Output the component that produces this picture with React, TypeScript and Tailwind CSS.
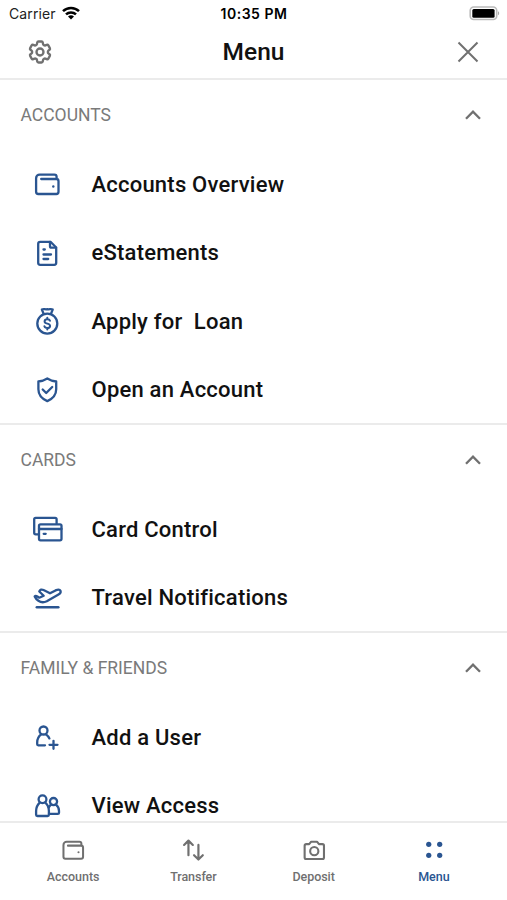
import type { ReactNode } from "react";
import { HiOutlineCog6Tooth } from "react-icons/hi2";

type MenuItem = {
    label: string;
    icon: ReactNode;
};

type MenuSection = {
    title: string;
    items: MenuItem[];
};

function Icon({
    size = 32,
    stroke = 2.3,
    children,
}: {
    size?: number;
    stroke?: number;
    children: ReactNode;
}) {
    return (
        <svg
            width={size}
            height={size}
            viewBox="0 0 32 32"
            fill="none"
            stroke="currentColor"
            strokeWidth={stroke}
            strokeLinecap="round"
            strokeLinejoin="round"
            className="shrink-0"
        >
            {children}
        </svg>
    );
}

const walletShape = (
    <>
        <path d="M25.600 11V8.800A2.200 2.200 0 0 0 23.400 6.600H8.700A3.600 3.600 0 0 0 5.100 10.200v13.600a2.200 2.200 0 0 0 2.200 2.200h18a2.200 2.200 0 0 0 2.200-2.200V13.200a2.200 2.200 0 0 0-2.200-2.200H10.200" />
        <circle cx="22.300" cy="18.500" r="1.200" fill="currentColor" stroke="none" />
    </>
);

const sections: MenuSection[] = [
    {
        title: "ACCOUNTS",
        items: [
            { label: "Accounts Overview", icon: <Icon>{walletShape}</Icon> },
            {
                label: "eStatements",
                icon: (
                    <Icon>
                        <path d="M19.500 4.800H9.200a2 2 0 0 0-2 2v19a2 2 0 0 0 2 2h14a2 2 0 0 0 2-2V10.500z" />
                        <path d="M19 5v4.200a1.500 1.500 0 0 0 1.500 1.500H25M12.500 12.500h1.300M12.500 17.500h7.500M12.500 22h4.700" />
                    </Icon>
                ),
            },
            {
                label: "Apply for\u00a0 Loan",
                icon: (
                    <Icon>
                        <circle cx="16.300" cy="18.600" r="10" />
                        <path d="M12.600 8.700 10.900 4.600c1.800-1.100 3 .1 5.400-.4 2.400.5 3.600-.7 5.400.4L20 8.700" />
                        <path
                            d="M19 15.800c-.3-1-1.400-1.500-2.700-1.500-1.600 0-2.700.8-2.700 2.100 0 2.900 5.500 1.500 5.500 4.500 0 1.300-1.200 2.100-2.800 2.100-1.500 0-2.600-.6-2.900-1.700M16.300 12.800v1.400M16.300 23v1.400"
                            strokeWidth="2"
                        />
                    </Icon>
                ),
            },
            {
                label: "Open an Account",
                icon: (
                    <Icon>
                        <path d="M16.300 4.500c2.900 1.800 5.800 2.700 8.900 3v7.800c0 5.300-3.500 9.500-8.900 11.800-5.400-2.300-8.900-6.500-8.900-11.800V7.500c3.100-.3 6-1.200 8.900-3z" />
                        <path d="m11.700 15.500 3.500 3.500 6-6" />
                    </Icon>
                ),
            },
        ],
    },
    {
        title: "CARDS",
        items: [
            {
                label: "Card Control",
                icon: (
                    <Icon>
                        <path d="M7.500 21.300H4.700a1.500 1.500 0 0 1-1.500-1.500V6.300a1.500 1.500 0 0 1 1.500-1.500h19.400a1.500 1.500 0 0 1 1.500 1.500v4.300" />
                        <rect x="8" y="11.300" width="22.500" height="16" rx="1.500" />
                        <path d="M8 16h22.500M12.700 20.800h2" />
                    </Icon>
                ),
            },
            {
                label: "Travel Notifications",
                icon: (
                    <Icon>
                        <path d="M5.800 25.200h21.500" strokeWidth="2.500" />
                        <path d="M3.700 14.500c.6-.9 1.500-.9 2.300-.3l2.300 1.500 4.400-1.900-4.400-4.300c.7-1.900 2.400-2.400 4.200-1.500l6.500 3.300 5.500-2.900c2.200-1 4.400-.9 5 .4.500 1.300-.3 2.700-2 3.700L15.800 19.300c-3 1.400-6 1.200-8.400-.5-1.800-1.200-2.900-2.500-3.700-4.300z" />
                    </Icon>
                ),
            },
        ],
    },
    {
        title: "FAMILY & FRIENDS",
        items: [
            {
                label: "Add a User",
                icon: (
                    <Icon>
                        <circle cx="12.500" cy="9.500" r="4" />
                        <path d="M14 24.300H7.200c-.6 0-1-.4-1-1v-2c0-3.300 1.400-5.900 3.900-7.900M15 13.400c1.600 1.200 2.700 2.500 3.400 4M22.500 19.800v8M18.500 23.800h8" />
                    </Icon>
                ),
            },
            {
                label: "View Access",
                icon: (
                    <Icon>
                        <circle cx="11.500" cy="9.300" r="3.900" />
                        <path d="M8.700 12.600c-2.300 2.200-3.600 4.900-3.600 8.400v3.700c0 .8.500 1.300 1.300 1.300h10.200c.8 0 1.300-.5 1.300-1.300V21c0-3.500-1.200-6.200-3.600-8.400" />
                        <circle cx="22.500" cy="11.600" r="3.600" />
                        <path d="M20 14.700c-1 .9-1.700 1.700-2.200 2.800M25 14.700c2 1.700 3 3.800 3 6.300v1.700c0 .8-.4 1.200-1.200 1.200H18" />
                    </Icon>
                ),
            },
        ],
    },
];

const tabs = [
    {
        label: "Accounts",
        icon: (
            <Icon size={28} stroke={2.3}>
                {walletShape}
            </Icon>
        ),
    },
    {
        label: "Transfer",
        icon: (
            <Icon size={28} stroke={2.5}>
                <path d="M10.800 22V5.500M5.800 10.200l5-4.900 5 4.900M22.200 10.200v16.500M17.200 22l5 4.900 5-4.900" />
            </Icon>
        ),
    },
    {
        label: "Deposit",
        icon: (
            <Icon size={28} stroke={2.4}>
                <path d="M7 9.300h3.500l2.300-2.800h6.600l2.300 2.800h4A1.700 1.700 0 0 1 27.400 11v13.500a1.700 1.700 0 0 1-1.700 1.700H7a1.700 1.700 0 0 1-1.700-1.700V11A1.700 1.700 0 0 1 7 9.300z" />
                <circle cx="16.300" cy="17.300" r="4.700" />
            </Icon>
        ),
    },
    {
        label: "Menu",
        active: true,
        icon: (
            <Icon size={28}>
                <g fill="currentColor" stroke="none">
                    <circle cx="10" cy="9.500" r="3" />
                    <circle cx="22.500" cy="9.500" r="3" />
                    <circle cx="10" cy="22" r="3" />
                    <circle cx="22.500" cy="22" r="3" />
                </g>
            </Icon>
        ),
    },
];

function StatusBar() {
    return (
        <div className="grid grid-cols-3 items-center h-[27px] pl-[9px] pr-[8px] font-['Inter'] text-black">
            <div className="flex items-center gap-[6px]">
                <span className="text-[14px] tracking-[0.1px] text-[#222]">Carrier</span>
                <svg width="18" height="14" viewBox="0 0 18 14" fill="none" stroke="#000" strokeWidth="2.500" className="-mt-px">
                    <path d="M1 5.200a11.500 11.500 0 0 1 16 0M4 8.400a7.200 7.200 0 0 1 10 0" />
                    <path d="M9 13.600 6 10.600a4.300 4.300 0 0 1 6 0z" fill="#000" stroke="none" />
                </svg>
            </div>
            <span className="text-center text-[14px] font-semibold tracking-[0.5px] whitespace-nowrap">10:35 PM</span>
            <svg width="31" height="15" viewBox="0 0 31 15" className="justify-self-end -mr-px">
                <rect x="1.200" y="1" width="26.500" height="12.500" rx="3.500" fill="#fff" stroke="#bbb" strokeWidth="1.600" />
                <rect x="3.300" y="3" width="22.300" height="8.700" rx="1.500" />
                <path d="M29 5.300c1.600.8 1.600 3.200 0 4z" fill="#aaa" />
            </svg>
        </div>
    );
}

function Section({ title, items }: MenuSection) {
    return (
        <section className="border-b-2 border-[#ebebeb]">
            <div className="flex items-center justify-between h-[70px] pl-[20.5px] pr-[26px] pb-px">
                <h2 className="pt-[1.5px] text-[17.5px] text-[#7a7a7a]">{title}</h2>
                <svg width="16" height="10" viewBox="0 0 16 10" fill="none" stroke="#707070" strokeWidth="2.300">
                    <path d="m1 8.700 7-7 7 7" />
                </svg>
            </div>
            <ul className="-mb-px">
                {items.map((item) => (
                    <li key={item.label} className="flex items-center h-[68.5px] pl-[31px] gap-[28.5px]">
                        <span className="text-[#2a5591]">{item.icon}</span>
                        <span className="text-[22px] font-medium tracking-[0.22px] text-[#111]">{item.label}</span>
                    </li>
                ))}
            </ul>
        </section>
    );
}

export default function App() {
    return (
        <div className="flex flex-col h-screen overflow-hidden bg-white font-['Roboto',sans-serif]">
            <StatusBar />
            <header className="grid grid-cols-3 items-center h-[53px] shrink-0 px-[28px] pb-px border-b-2 border-[#ebebeb] text-[#707070]">
                <HiOutlineCog6Tooth size={28} strokeWidth={2} className="-ml-[2px]" />
                <h1 className="text-center text-[24.5px] font-medium text-[#111]">Menu</h1>
                <svg
                    width="22"
                    height="22"
                    viewBox="0 0 22 22"
                    fill="none"
                    stroke="currentColor"
                    strokeWidth="2"
                    className="justify-self-end"
                >
                    <path d="m1.500 1.500 19 19M20.500 1.500l-19 19" />
                </svg>
            </header>
            <main className="flex-1 min-h-0 overflow-hidden">
                {sections.map((section) => (
                    <Section key={section.title} {...section} />
                ))}
            </main>
            <nav className="flex shrink-0 h-[79px] px-[13px] pt-[13px] border-t-2 border-[#ebebeb]">
                {tabs.map((tab) => (
                    <div
                        key={tab.label}
                        className={`flex flex-1 flex-col items-center gap-[4px] ${tab.active ? "text-[#2a5591]" : "text-[#707070]"}`}
                    >
                        {tab.icon}
                        <span className="text-[12.5px] leading-[18px] font-medium tracking-[-0.05px]">{tab.label}</span>
                    </div>
                ))}
            </nav>
        </div>
    );
}
